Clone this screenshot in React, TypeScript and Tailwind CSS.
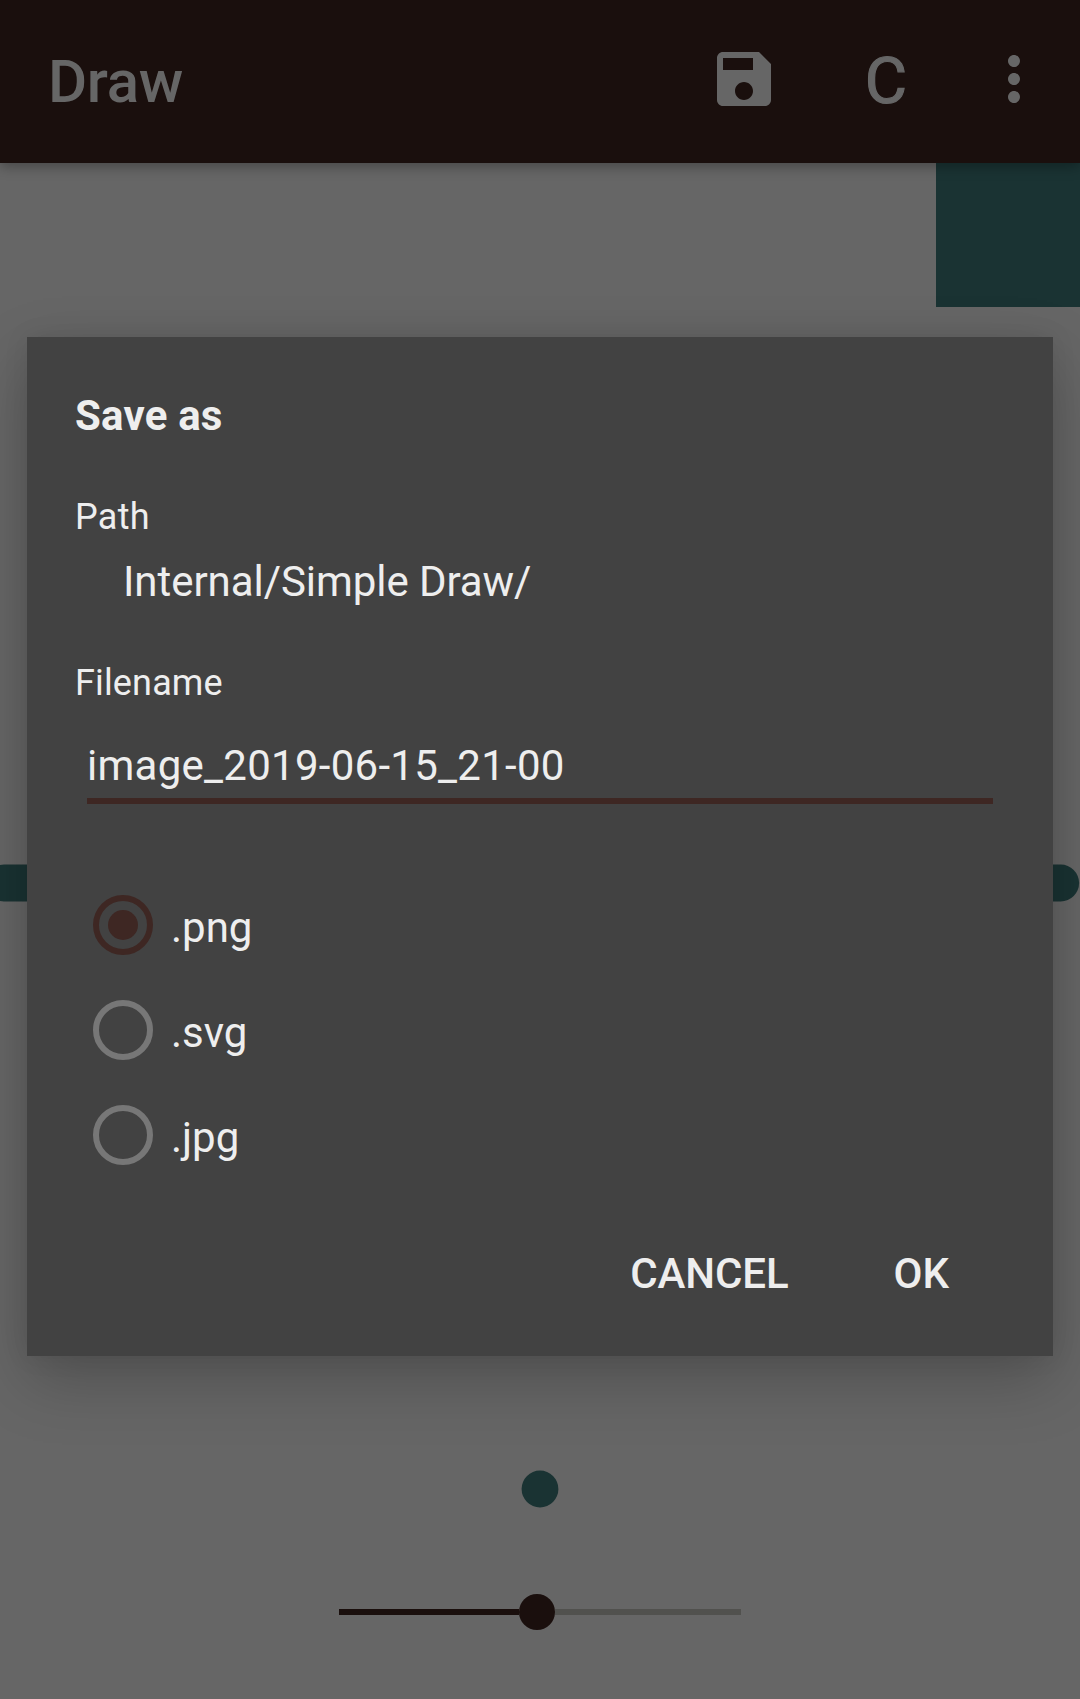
import React from "react";

function SaveIcon() {
  return (
    <svg viewBox="0 0 24 24" className="h-[72px] w-[72px] fill-[#666666]">
      <path d="M17 3H5c-1.11 0-2 .9-2 2v14c0 1.1.89 2 2 2h14c1.1 0 2-.9 2-2V7l-4-4zm-5 16c-1.66 0-3-1.34-3-3s1.34-3 3-3 3 1.34 3 3-1.34 3-3 3zm3-10H5V5h10v4z" />
    </svg>
  );
}

function MoreIcon() {
  return (
    <svg viewBox="0 0 24 24" className="h-[72px] w-[72px] fill-[#666666]">
      <path d="M12 8c1.1 0 2-.9 2-2s-.9-2-2-2-2 .9-2 2 .9 2 2 2zm0 2c-1.1 0-2 .9-2 2s.9 2 2 2 2-.9 2-2-.9-2-2-2zm0 6c-1.1 0-2 .9-2 2s.9 2 2 2 2-.9 2-2-.9-2-2-2z" />
    </svg>
  );
}

function Toolbar() {
  return (
    <header className="relative z-10 flex h-[163px] items-start bg-[#1a0f0d] pt-[43px] shadow-[0_4px_12px_rgba(0,0,0,0.3)]">
      <h1 className="ml-12 flex-1 text-[60px] leading-[77px] font-medium tracking-[-0.3px]">Draw</h1>
      <div className="flex items-start">
        <SaveIcon />
        <span className="mt-[2px] ml-[70px] w-[72px] text-center text-[65px] leading-[72px] [-webkit-text-stroke:1.2px_#666666]">C</span>
        <span className="mr-[30px] ml-[56px]">
          <MoreIcon />
        </span>
      </div>
    </header>
  );
}

/* The horizontal brush stroke drawn on the canvas. */
function BrushStroke() {
  return (
    <svg viewBox="0 0 1080 40" className="mt-[556px] h-10 w-[1080px] shrink-0">
      <line x1="4" y1="20" x2="1060.7" y2="20" stroke="#1a3333" strokeWidth="36.8" strokeLinecap="round" />
    </svg>
  );
}

function BrushPreview() {
  return (
    <svg viewBox="0 0 40 40" className="mt-[566px] h-10 w-10 shrink-0 self-center fill-[#1a3333]">
      <circle cx="20" cy="20" r="18.4" />
    </svg>
  );
}

function Option({ label, selected = false }: { label: string; selected?: boolean }) {
  return (
    <label className="flex h-[60px] items-center">
      <span
        className={
          selected
            ? "flex h-[60px] w-[60px] items-center justify-center rounded-full border-[6px] border-[#3e2723]"
            : "h-[60px] w-[60px] rounded-full border-[6px] border-[#777777]"
        }
      >
        {selected && <span className="h-[30px] w-[30px] rounded-full bg-[#3e2723]" />}
      </span>
      <span className="mt-[6px] ml-[18px] text-[42px] leading-[50px]">{label}</span>
    </label>
  );
}

function SaveDialog() {
  return (
    <section className="absolute top-[337px] left-[27px] z-20 flex h-[1019px] w-[1026px] flex-col bg-[#424242] px-12 pt-[54px] text-[42px] leading-[50px] text-[#eeeeee] shadow-[0_24px_60px_rgba(0,0,0,0.22),0_0_24px_rgba(0,0,0,0.08)]">
      <h2 className="font-bold tracking-[0.2px]">Save as</h2>
      <p className="mt-[55px] text-[36px] leading-[42px] tracking-[0.3px]">Path</p>
      <p className="mt-[19px] ml-12 tracking-[-0.06px]">Internal/Simple Draw/</p>
      <p className="mt-[55px] text-[36px] leading-[42px] tracking-[0.15px]">Filename</p>
      <div className="mx-3 mt-[37px] border-b-[6px] border-[#3e2723] pb-[7px] tracking-[0.27px]">image_2019-06-15_21-00</div>
      <div className="mt-[91px] ml-[18px] flex flex-col gap-[45px]">
        <Option label=".png" selected />
        <Option label=".svg" />
        <Option label=".jpg" />
      </div>
      <div className="mt-[84px] flex justify-end gap-[105px] pr-[56px] font-medium">
        <button className="tracking-[-0.1px]">CANCEL</button>
        <button>OK</button>
      </div>
    </section>
  );
}

export default function App() {
  return (
    <div className="relative flex h-[1699px] w-[1080px] flex-col overflow-hidden bg-[#666666] font-['Roboto',sans-serif] text-[#666666]">
      <Toolbar />
      <main className="flex flex-1 flex-col">
        <div className="h-36 w-36 self-end bg-[#1a3333]" />
        <BrushStroke />
        <BrushPreview />
        <div className="mt-[85px] flex h-9 w-[402px] items-center self-center">
          <div className="h-[6px] w-[180px] bg-[#1a0f0d]" />
          <div className="h-9 w-9 rounded-full bg-[#1a0f0d]" />
          <div className="h-[6px] flex-1 bg-[#51514e]" />
        </div>
      </main>
      <SaveDialog />
    </div>
  );
}
